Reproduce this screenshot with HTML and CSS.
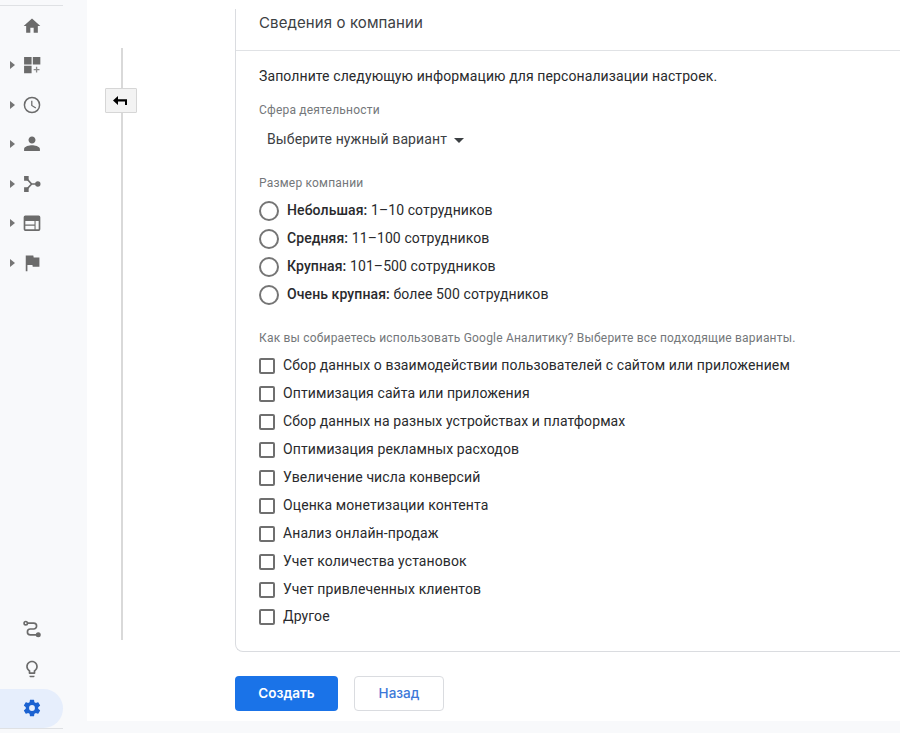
FILE: index.html
```html
<!DOCTYPE html>
<html lang="ru">
<head>
  <meta charset="UTF-8"/>
  <meta name="viewport" content="width=device-width,initial-scale=1.0"/>
  <title>Сведения о компании</title>
  <link rel="stylesheet" href="styles.css">
</head>
<body>
  <nav class="sidebar">
    <div class="nav-group nav-top">
      <a class="nav-item"><svg class="icon" viewBox="0 0 24 24"><path d="M10 20v-6h4v6h5v-8h3L12 3 2 12h3v8z"/></svg></a>
      <a class="nav-item"><i class="arrow"></i><svg class="icon" viewBox="0 0 24 24"><path d="M2.500 2.500h9v9h-9zM13 2.500h9v9h-9zM2.500 13h9v9h-9z"/><path class="plus" d="M16.700 14h1.600v2.700H21v1.600h-2.700V21h-1.600v-2.700H14v-1.600h2.700z"/></svg></a>
      <a class="nav-item"><i class="arrow"></i><svg class="icon" viewBox="0 0 24 24"><path d="M12 2a10 10 0 1 0 0 20 10 10 0 0 0 0-20zm0 18.200a8.200 8.200 0 1 1 0-16.400 8.200 8.200 0 0 1 0 16.400zM12.500 7H11v6l5.200 3.200.8-1.300-4.500-2.700z"/></svg></a>
      <a class="nav-item"><i class="arrow"></i><svg class="icon" viewBox="0 0 24 24"><path d="M12 11.500c2.300 0 4.200-1.900 4.200-4.200S14.300 3 12 3 7.800 5 7.800 7.300s1.900 4.200 4.200 4.200zm0 2c-2.900 0-9.500 1.300-9.500 4.500v2.500h19V18c0-3.200-6.600-4.500-9.500-4.500z"/></svg></a>
      <a class="nav-item"><i class="arrow"></i><svg class="icon" viewBox="0 0 24 24"><path d="M2.500 2.500H8V8H2.500zM2.500 16H8v5.500H2.500z"/><circle cx="19" cy="12" r="3.200"/><path class="stroke" d="M6 6l5.500 6L6 18M11.500 12H18"/></svg></a>
      <a class="nav-item"><i class="arrow"></i><svg class="icon" viewBox="0 0 24 24"><path fill-rule="evenodd" d="M4 3h16a2 2 0 0 1 2 2v14.500a2 2 0 0 1-2 2H4a2 2 0 0 1-2-2V5a2 2 0 0 1 2-2zm0 6.500v4.300h11V9.500zm0 5.700v4.300h11v-4.300zm12.300-5.700v10H20v-10z"/></svg></a>
      <a class="nav-item"><i class="arrow"></i><svg class="icon" viewBox="0 0 24 24"><path d="M14 5.500L13.600 3H4.500v19h2v-7.500h6l.4 2h8v-11z"/></svg></a>
    </div>
    <div class="nav-group nav-bottom">
      <a class="nav-item"><svg class="icon" viewBox="0 0 24 24"><circle class="stroke" cx="4.500" cy="5" r="2"/><circle cx="19.500" cy="19" r="3"/><path class="stroke" d="M6.500 5H14a3.500 3.500 0 0 1 0 7h-4a3.500 3.500 0 0 0 0 7h8"/></svg></a>
      <a class="nav-item"><svg class="icon" viewBox="0 0 24 24"><path d="M9 21c0 .55.45 1 1 1h4c.55 0 1-.45 1-1v-1H9v1zm3-19C8.140 2 5 5.140 5 9c0 2.380 1.190 4.470 3 5.740V17c0 .55.45 1 1 1h6c.55 0 1-.45 1-1v-2.260c1.810-1.270 3-3.360 3-5.740 0-3.860-3.140-7-7-7zm2.850 11.100l-.85.6V16h-4v-2.300l-.85-.6A4.997 4.997 0 0 1 7 9c0-2.760 2.240-5 5-5s5 2.240 5 5c0 1.630-.8 3.160-2.150 4.100z"/></svg></a>
      <a class="nav-item active"><svg class="icon" viewBox="0 0 24 24"><path d="M19.430 12.980c.04-.32.07-.64.07-.98s-.03-.66-.07-.98l2.110-1.650c.19-.15.24-.42.12-.64l-2-3.460c-.12-.22-.39-.3-.61-.22l-2.490 1c-.52-.4-1.080-.73-1.690-.98l-.38-2.650A.488.488 0 0 0 14 2h-4c-.25 0-.46.18-.49.42l-.38 2.650c-.61.25-1.170.59-1.690.98l-2.490-1c-.23-.09-.49 0-.61.22l-2 3.460c-.13.22-.07.49.12.64l2.110 1.650c-.04.32-.07.65-.07.98s.03.66.07.98l-2.110 1.650c-.19.15-.24.42-.12.64l2 3.460c.12.22.39.3.61.22l2.490-1c.52.4 1.080.73 1.690.98l.38 2.650c.03.24.24.42.49.42h4c.25 0 .46-.18.49-.42l.38-2.650c.61-.25 1.170-.59 1.690-.98l2.490 1c.23.09.49 0 .61-.22l2-3.460c.12-.22.07-.49-.12-.64l-2.110-1.650zM12 15.500a3.500 3.500 0 1 1 0-7 3.500 3.500 0 0 1 0 7z"/></svg></a>
    </div>
  </nav>

  <main class="content">
    <div class="divider">
      <button class="btn-collapse"><svg viewBox="0 0 14 10"><path d="M0 4.500L5 0v3.300h9V9h-2V5.600H5V9z"/></svg></button>
    </div>
    <div class="form">
      <section class="card">
        <h1>Сведения о компании</h1>
        <div class="card-body">
          <p class="intro">Заполните следующую информацию для персонализации настроек.</p>
          <p class="label">Сфера деятельности</p>
          <div class="select">Выберите нужный вариант<i class="caret"></i></div>
          <p class="label label-size">Размер компании</p>
          <ul class="options radios">
            <li><i class="radio"></i><span><b>Небольшая:</b> 1–10 сотрудников</span></li>
            <li><i class="radio"></i><span><b>Средняя:</b> 11–100 сотрудников</span></li>
            <li><i class="radio"></i><span><b>Крупная:</b> 101–500 сотрудников</span></li>
            <li><i class="radio"></i><span><b>Очень крупная:</b> более 500 сотрудников</span></li>
          </ul>
          <p class="label label-usage">Как вы собираетесь использовать Google Аналитику? Выберите все подходящие варианты.</p>
          <ul class="options checks">
            <li><i class="check"></i><span>Сбор данных о взаимодействии пользователей с сайтом или приложением</span></li>
            <li><i class="check"></i><span>Оптимизация сайта или приложения</span></li>
            <li><i class="check"></i><span>Сбор данных на разных устройствах и платформах</span></li>
            <li><i class="check"></i><span>Оптимизация рекламных расходов</span></li>
            <li><i class="check"></i><span>Увеличение числа конверсий</span></li>
            <li><i class="check"></i><span>Оценка монетизации контента</span></li>
            <li><i class="check"></i><span>Анализ онлайн-продаж</span></li>
            <li><i class="check"></i><span>Учет количества установок</span></li>
            <li><i class="check"></i><span>Учет привлеченных клиентов</span></li>
            <li><i class="check"></i><span>Другое</span></li>
          </ul>
        </div>
      </section>
      <div class="actions">
        <button class="btn btn-primary">Создать</button>
        <button class="btn btn-back">Назад</button>
      </div>
    </div>
  </main>
</body>
</html>
```
FILE: styles.css
```css
*{margin:0;padding:0;box-sizing:border-box;}
body{display:flex;height:733px;overflow:hidden;background:#f8f9fb;font-family:Roboto,sans-serif;font-size:14px;color:#292a2d;}

/* sidebar */
.sidebar{width:87px;flex:none;display:flex;flex-direction:column;justify-content:space-between;padding:5px 0 4px;}
.nav-group{width:63px;}
.nav-top{border-top:1px solid #dfe1e4;}
.nav-bottom{border-bottom:1px solid #dfe1e4;}
.nav-item{display:flex;align-items:center;height:39.500px;padding-left:10px;}
.arrow{width:5px;border:solid transparent;border-width:4px 0 4px 5px;border-left-color:#757575;}
.icon{width:20px;height:20px;margin-left:6.500px;fill:#6b6b6b;}
.nav-item .icon:first-child{margin-left:11.500px;}
.icon .stroke{fill:none;stroke:#6b6b6b;stroke-width:2;}
.icon .plus{fill:#8a8a8a;}
.active{background:#e6eefc;border-radius:0 20px 20px 0;}
.active .icon{fill:#1b62d1;}

/* content */
.content{flex:1;height:721px;display:flex;background:#fff;min-width:0;}
.divider{width:32px;height:592px;flex:none;margin:48px 0 0 18px;padding-top:40px;background:linear-gradient(#d9d9d9,#d9d9d9) 16px 0/2px 100% no-repeat;}
.btn-collapse{display:flex;align-items:center;width:32px;height:25px;padding-left:7px;background:#f3f3f3;border:1px solid #d6d6d6;border-radius:1px;}
.btn-collapse svg{width:14px;height:10px;}
.form{flex:1;min-width:0;margin-left:98px;padding-top:9px;}
.card{height:643px;border:solid #dadce0;border-width:0 0 1px 1px;border-bottom-left-radius:8px;}
h1{height:42px;padding-left:23px;border-bottom:1px solid #e0e2e5;font:400 15px/27px Inter,sans-serif;letter-spacing:.1px;color:#3c4043;}
.card-body{padding:15px 0 0 23px;white-space:nowrap;}
.intro{line-height:20px;letter-spacing:.1px;}
.label{font-size:12px;line-height:16px;letter-spacing:.2px;color:#74777a;margin-top:16px;}
.select{display:flex;align-items:center;gap:7px;height:20px;margin-top:11px;padding-left:8px;letter-spacing:.1px;color:#3c4043;}
.caret{margin-top:2px;border:solid transparent;border-width:5px 5px 0;border-top-color:#3c4043;}
.label-size{margin-top:26px;}
.options{list-style:none;letter-spacing:.1px;}
.options li{display:flex;align-items:center;height:27.950px;}
.options span{position:relative;top:-1px;}
.options b{font-weight:500;}
.radios{margin-top:6.300px;}
.radio{width:20px;height:20px;margin-right:8px;border:2px solid #757575;border-radius:50%;}
.label-usage{margin-top:21px;}
.checks{margin-top:6px;}
.check{width:16px;height:16px;margin-right:8px;border:2px solid #6f6f6f;border-radius:2px;}
.actions{display:flex;gap:16px;margin-top:24px;}
.btn{height:35px;padding-bottom:1px;border-radius:4px;font:500 13.500px Inter,sans-serif;}
.btn-primary{width:103px;background:#1a73e8;border:0;color:#fff;font-weight:600;}
.btn-back{width:90px;background:#fff;border:1px solid #dadce0;color:#3c78d8;}
```
